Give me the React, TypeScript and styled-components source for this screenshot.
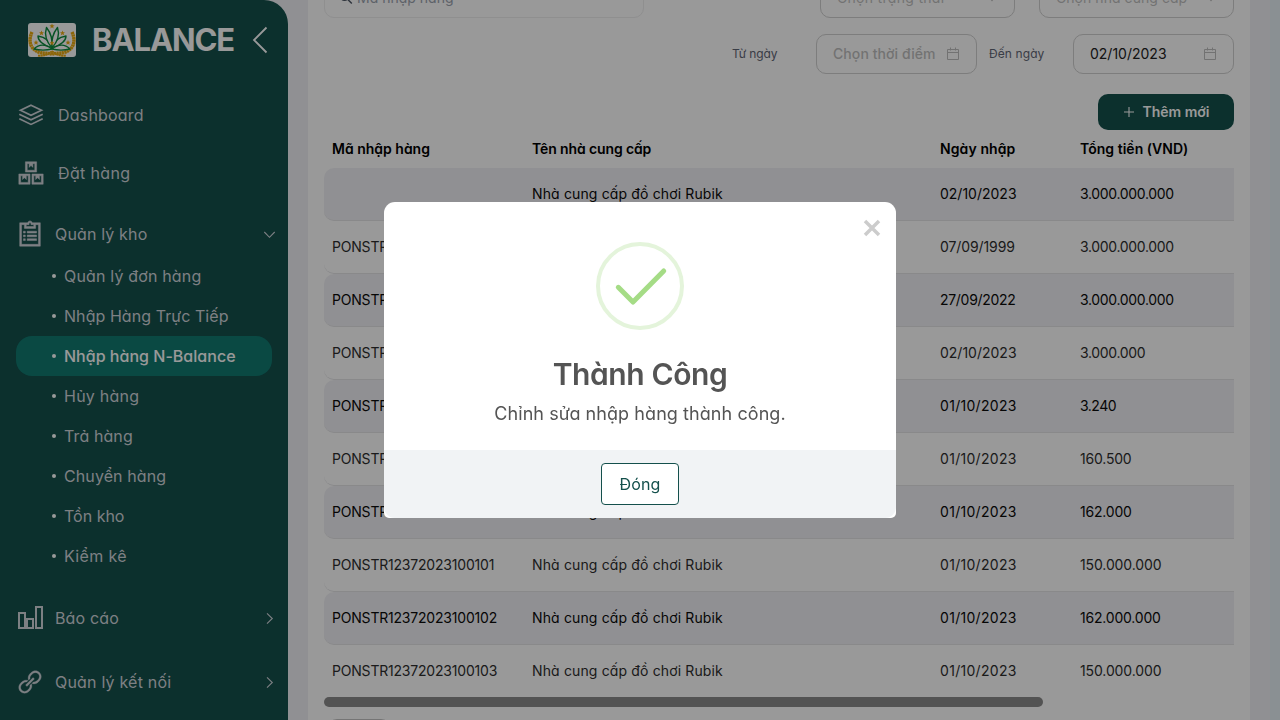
import React from 'react';
import styled, { createGlobalStyle, css } from 'styled-components';
import { LiaBoxesSolid, LiaClipboardListSolid, LiaLinkSolid } from 'react-icons/lia';

const GlobalStyle = createGlobalStyle`
  * { box-sizing: border-box; }
  html, body { margin: 0; height: 720px; overflow: hidden; }
  body {
    font-family: Inter, "Noto Sans", sans-serif;
    font-feature-settings: "cv11";
    font-size: 14px;
    color: #000;
    background: #f1f1f5;
  }
  button { font: inherit; font-feature-settings: inherit; cursor: pointer; }
  svg { display: block; flex: none; }
`;

const Shell = styled.div`
  display: flex;
  width: 1280px;
  height: 720px;
  overflow: hidden;
`;

const Sidebar = styled.aside`
  flex: none;
  width: 288px;
  height: 720px;
  overflow: hidden;
  background: #14504c;
  border-top-right-radius: 24px;
  color: #d1d5db;
`;

const Brand = styled.div`
  display: flex;
  align-items: center;
  height: 80px;
  padding-left: 28px;
`;

const LogoTile = styled.div`
  width: 48px;
  height: 34px;
  border-radius: 3px;
  overflow: hidden;
  background: #fff;
`;

const BrandName = styled.div`
  width: 160px;
  margin-left: 16px;
  font-size: 31px;
  font-weight: 700;
  line-height: 40px;
  letter-spacing: -1.1px;
  color: #fff;
`;

const MenuItem = styled.div<{ $h: number; $left: number; $gap: number }>`
  display: flex;
  align-items: center;
  height: ${(p) => p.$h}px;
  padding: 0 12px 0 ${(p) => p.$left}px;
  font-size: 16px;
  gap: ${(p) => p.$gap}px;
`;

const MenuLabel = styled.span<{ $ls?: number }>`
  flex: 1;
  white-space: nowrap;
  letter-spacing: ${(p) => p.$ls ?? 0}px;
`;

const Nav = styled.nav`
  padding-top: 6px;
`;

const SubList = styled.ul`
  list-style: none;
  margin: -10px 0 10px;
  padding: 0 16px;
`;

const SubItem = styled.li<{ $active?: boolean; $ls?: number }>`
  display: flex;
  align-items: center;
  gap: 8px;
  height: 40px;
  padding-left: 36px;
  border-radius: 16px;
  font-size: 16px;
  white-space: nowrap;
  letter-spacing: ${(p) => p.$ls ?? 0}px;
  ${(p) => p.$active && css`background: #127a71; color: #fff; font-weight: 500;`}
  &::before {
    content: "";
    width: 4px;
    height: 4px;
    border-radius: 2px;
    background: #fff;
  }
`;

const Main = styled.main`
  flex: 1;
  display: flex;
  padding-left: 20px;
`;

const Card = styled.section`
  width: 942px;
  height: 740px;
  padding: 0 16px;
  background: #fff;
`;

const RightGutter = styled.div`
  width: 10px;
  margin-left: auto;
  background: #e6f0f5;
`;

const FilterRow = styled.div`
  display: flex;
  align-items: center;
  height: 40px;
  margin-top: -22px;
`;

const Control = styled.div<{ $w: number; $soft?: boolean; $muted?: boolean }>`
  display: flex;
  align-items: center;
  justify-content: space-between;
  width: ${(p) => p.$w}px;
  height: 40px;
  padding: 0 16px;
  border: 1px solid ${(p) => (p.$soft ? '#eeeeef' : '#d0d0d0')};
  border-radius: 10px;
  color: ${(p) => (p.$muted ? '#bfbfbf' : '#222')};
  font-size: 14px;
  white-space: nowrap;
`;

const ControlText = styled.span<{ $ls?: number; $medium?: boolean }>`
  padding-bottom: 2px;
  letter-spacing: ${(p) => p.$ls ?? 0}px;
  font-weight: ${(p) => (p.$medium ? 500 : 400)};
`;

const SearchBox = styled(Control)`
  justify-content: flex-start;
  gap: 4px;
  padding-left: 14px;
  margin-right: auto;
  color: #9ca3af;
`;

const SelectBox = styled(Control)`
  margin-left: 24px;
`;

const DateRow = styled.div`
  display: flex;
  align-items: center;
  justify-content: flex-end;
  height: 40px;
  margin-top: 16px;
`;

const DateLabel = styled.label<{ $spaced?: boolean; $ls: number }>`
  width: 84px;
  margin-left: ${(p) => (p.$spaced ? 12 : 0)}px;
  padding-bottom: 2px;
  font-size: 12px;
  letter-spacing: ${(p) => p.$ls}px;
  color: #5f6675;
`;

const Actions = styled.div`
  display: flex;
  justify-content: flex-end;
  margin-top: 20px;
`;

const AddButton = styled.button`
  display: flex;
  align-items: center;
  justify-content: center;
  gap: 8px;
  width: 136px;
  height: 36px;
  padding: 0 0 1px;
  border: 0;
  border-radius: 10px;
  background: #14504c;
  color: #fff;
  font-size: 14px;
  font-weight: 600;
`;

const columns = css`
  display: grid;
  grid-template-columns: 200px 408px 140px 1fr;
  align-items: center;
  padding-left: 8px;
  padding-bottom: 2px;
  white-space: nowrap;
`;

const TableHead = styled.div`
  ${columns}
  height: 38px;
  font-weight: 600;
`;

const TableRow = styled.div<{ $striped: boolean }>`
  ${columns}
  height: 53px;
  border-bottom: 1px solid #e4e4e7;
  border-radius: 10px 0 0 10px;
  background: ${(p) => (p.$striped ? '#f1f1f5' : '#fff')};
  color: ${(p) => (p.$striped ? '#0a0a0a' : '#2e2e2e')};
  &:last-child { border-bottom-color: transparent; }
`;

const Cell = styled.span<{ $ls?: number }>`
  letter-spacing: ${(p) => p.$ls ?? 0}px;
`;

const ScrollThumb = styled.div`
  position: relative;
  width: 719px;
  height: 10px;
  margin-top: -1px;
  border-radius: 5px;
  background: #8a8a8a;
`;

const PageSize = styled.div`
  width: 64px;
  height: 32px;
  margin: 12px 0 0 3px;
  border: 1px solid #c4c4c4;
  border-radius: 10px;
`;

const Overlay = styled.div`
  position: fixed;
  inset: 0;
  display: flex;
  align-items: center;
  justify-content: center;
  background: rgba(0, 0, 0, 0.4);
`;

const Dialog = styled.div`
  position: relative;
  display: flex;
  flex-direction: column;
  align-items: center;
  width: 512px;
  height: 316px;
  padding-top: 40px;
  border-radius: 11px 11px 5px 5px;
  overflow: hidden;
  background: #fff;
  color: #545454;
`;

const CloseButton = styled.button`
  position: absolute;
  top: 17px;
  right: 15px;
  padding: 0;
  border: 0;
  background: none;
`;

const Title = styled.h2`
  margin: 24px 0 0;
  font-size: 30px;
  font-weight: 600;
  line-height: 40px;
  letter-spacing: -0.4px;
`;

const Message = styled.p`
  margin: 7px 0 0;
  font-size: 18px;
  line-height: 26px;
  letter-spacing: 0.07px;
`;

const Footer = styled.div`
  display: flex;
  align-items: center;
  justify-content: center;
  width: 100%;
  height: 68px;
  margin-top: auto;
  background: #f1f3f5;
  border-radius: 0 0 11px 11px;
`;

const DismissButton = styled.button`
  width: 78px;
  height: 42px;
  padding: 0;
  border: 1px solid #14504c;
  border-radius: 4px;
  background: #fff;
  color: #14504c;
  font-size: 16px;
  letter-spacing: 0.2px;
`;

const Chevron = ({ down }: { down?: boolean }) => (
  <svg width="13" height="13" viewBox="0 0 13 13" fill="none" stroke="#d1d5db" strokeWidth="1.1">
    <path d={down ? 'M1.3 4l5.2 5.3L11.7 4' : 'M4 1.3l5.3 5.2L4 11.7'} />
  </svg>
);

const SelectArrow = () => (
  <svg width="12" height="12" viewBox="0 0 12 12" fill="none" stroke="#bfbfbf" strokeWidth="1.2">
    <path d="M1.500 3.500L6 8.500l4.500-5" />
  </svg>
);

const CalendarIcon = () => (
  <svg width="14" height="14" viewBox="0 0 14 14" fill="none" stroke="#bfbfbf" strokeWidth="1">
    <path d="M1.500 2.500h11v10h-11zM1.500 5.500h11M4.500 .5v3M9.500 .5v3" />
  </svg>
);

const LayersIcon = () => (
  <svg width="28" height="28" viewBox="0 0 28 28" fill="none" stroke="#d1d5db" strokeWidth="1.7">
    <path d="M14 4.200L24.500 9.200 14 14.200 3.500 9.200z" />
    <path d="M2.300 13.200L14 18.800l11.700-5.600M2.300 17.800L14 23.400l11.700-5.600" />
  </svg>
);

const BarsIcon = () => (
  <svg width="28" height="28" viewBox="0 0 28 28" fill="none" stroke="#d1d5db" strokeWidth="2">
    <path d="M3 9h6v15H3zM11 15h6v9h-6zM20 3h6v21h-6z" />
  </svg>
);

const star = 'M0-2.600L.75-.85 2.600-.8 1.150.35 1.600 2.200 0 1.150-1.600 2.200-1.150.35-2.600-.8-.75-.85z';
const Logo = () => (
  <svg width="48" height="34" viewBox="0 0 48 34">
    <g fill="none" stroke="#eaaa10" strokeWidth="3.400" strokeDasharray="2.200 .35">
      <path d="M4 9C-.5 19 3 27 12 29.500c6 1.500 9 0 12 2" />
      <path d="M44 9c4.500 10 1 18-8 20.500-6 1.500-9 0-12 2" />
      <path d="M10 32.500c6 1 11-1.500 14-4.500 3 3 8 5.500 14 4.500" strokeWidth="2" />
    </g>
    <g fill="#fff" stroke="#0d8a3e" strokeWidth="1.400" strokeLinejoin="round">
      <path d="M24 25C12 21 10 17 10 13c7 1 12 5 14 12z" />
      <path d="M24 25c12-4 14-8 14-12-7 1-12 5-14 12z" />
      <path d="M24 25C17 17 17 9 18.500 4.500c4 5 6.500 11 5.500 20.500z" />
      <path d="M24 25c7-8 7-16 5.500-20.500-4 5-6.500 11-5.500 20.500z" />
      <path d="M24 26C16 20 10 22 6 26c6 1.500 12 1.500 18 0z" />
      <path d="M24 26c8-6 14-4 18 0-6 1.500-12 1.500-18 0z" />
    </g>
    <g fill="#eaaa10">
      {[[24, 3.2], [13.5, 10], [34.5, 10], [8, 19.5], [40, 19.5], [24, 20]].map(([x, y]) => (
        <path key={`${x}-${y}`} d={star} transform={`translate(${x} ${y})`} />
      ))}
    </g>
  </svg>
);

const subItems: { label: string; ls?: number; active?: boolean }[] = [
  { label: 'Quản lý đơn hàng', ls: 0.17 },
  { label: 'Nhập Hàng Trực Tiếp', ls: 0.06 },
  { label: 'Nhập hàng N-Balance', ls: 0.02, active: true },
  { label: 'Hủy hàng', ls: 0.25 },
  { label: 'Trả hàng', ls: 0.1 },
  { label: 'Chuyển hàng', ls: 0.1 },
  { label: 'Tồn kho' },
  { label: 'Kiểm kê', ls: 0.35 },
];

const supplier = 'Nhà cung cấp đồ chơi Rubik';

interface Row {
  code: string;
  date: string;
  dateLs: number;
  total: string;
  totalLs: number;
}

const rows: Row[] = [
  { code: '', date: '02/10/2023', dateLs: 0, total: '3.000.000.000', totalLs: -0.33 },
  { code: 'PONSTR12371999090701', date: '07/09/1999', dateLs: -0.1, total: '3.000.000.000', totalLs: -0.33 },
  { code: 'PONSTR12372022092701', date: '27/09/2022', dateLs: -0.3, total: '3.000.000.000', totalLs: -0.33 },
  { code: 'PONSTR12372023100201', date: '02/10/2023', dateLs: 0, total: '3.000.000', totalLs: -0.33 },
  { code: 'PONSTR12372023100106', date: '01/10/2023', dateLs: 0.3, total: '3.240', totalLs: -0.5 },
  { code: 'PONSTR12372023100105', date: '01/10/2023', dateLs: 0.3, total: '160.500', totalLs: -0.2 },
  { code: 'PONSTR12372023100104', date: '01/10/2023', dateLs: 0.3, total: '162.000', totalLs: -0.2 },
  { code: 'PONSTR12372023100101', date: '01/10/2023', dateLs: 0.3, total: '150.000.000', totalLs: -0.12 },
  { code: 'PONSTR12372023100102', date: '01/10/2023', dateLs: 0.3, total: '162.000.000', totalLs: -0.2 },
  { code: 'PONSTR12372023100103', date: '01/10/2023', dateLs: 0.3, total: '150.000.000', totalLs: -0.12 },
];

export default function App() {
  return (
    <>
      <GlobalStyle />
      <Shell>
        <Sidebar>
          <Brand>
            <LogoTile><Logo /></LogoTile>
            <BrandName>BALANCE</BrandName>
            <svg width="16" height="28" viewBox="0 0 16 28" fill="none" stroke="#fff" strokeWidth="1.8">
              <path d="M14.500 1.500L2 14l12.500 12.500" />
            </svg>
          </Brand>
          <Nav>
            <MenuItem $h={58} $left={17} $gap={13}><LayersIcon /><MenuLabel $ls={0.2}>Dashboard</MenuLabel></MenuItem>
            <MenuItem $h={58} $left={16} $gap={12}><LiaBoxesSolid size={30} strokeWidth={0.5} /><MenuLabel $ls={0.35}>Đặt hàng</MenuLabel></MenuItem>
            <MenuItem $h={64} $left={15} $gap={10}><LiaClipboardListSolid size={30} strokeWidth={0.5} /><MenuLabel $ls={0.15}>Quản lý kho</MenuLabel><Chevron down /></MenuItem>
          </Nav>
          <SubList>
            {subItems.map((item) => (
              <SubItem key={item.label} $active={item.active} $ls={item.ls}>{item.label}</SubItem>
            ))}
          </SubList>
          <MenuItem $h={64} $left={16} $gap={11}><BarsIcon /><MenuLabel $ls={0.15}>Báo cáo</MenuLabel><Chevron /></MenuItem>
          <MenuItem $h={64} $left={15} $gap={10}><LiaLinkSolid size={30} strokeWidth={0.3} /><MenuLabel $ls={0.2}>Quản lý kết nối</MenuLabel><Chevron /></MenuItem>
        </Sidebar>
        <Main>
          <Card>
            <FilterRow>
              <SearchBox $w={320} $soft>
                <svg width="14" height="14" viewBox="0 0 14 14" fill="none" stroke="#4b5563" strokeWidth="1.4">
                  <circle cx="5.500" cy="5" r="4.300" /><path d="M8.600 8.300l4.200 4.200" />
                </svg>
                <ControlText>Mã nhập hàng</ControlText>
              </SearchBox>
              <SelectBox $w={195} $muted><ControlText $ls={0.3}>Chọn trạng thái</ControlText><SelectArrow /></SelectBox>
              <SelectBox $w={195} $muted><ControlText $ls={0.05}>Chọn nhà cung cấp</ControlText><SelectArrow /></SelectBox>
            </FilterRow>
            <DateRow>
              <DateLabel $ls={-0.1}>Từ ngày</DateLabel>
              <Control $w={161} $muted><ControlText $medium $ls={0.08}>Chọn thời điểm</ControlText><CalendarIcon /></Control>
              <DateLabel $spaced $ls={0.1}>Đến ngày</DateLabel>
              <Control $w={161}><ControlText>02/10/2023</ControlText><CalendarIcon /></Control>
            </DateRow>
            <Actions>
              <AddButton>
                <svg width="12" height="12" viewBox="0 0 12 12" fill="none" stroke="#fff" strokeWidth="1.1"><path d="M6 1v10M1 6h10" /></svg>
                Thêm mới
              </AddButton>
            </Actions>
            <TableHead>
              <Cell>Mã nhập hàng</Cell>
              <Cell $ls={-0.12}>Tên nhà cung cấp</Cell>
              <Cell $ls={0.1}>Ngày nhập</Cell>
              <Cell $ls={0.03}>Tổng tiền (VND)</Cell>
            </TableHead>
            <div>
              {rows.map((row, i) => (
                <TableRow key={i} $striped={i % 2 === 0}>
                  <Cell $ls={-0.2}>{row.code}</Cell>
                  <Cell $ls={0.14}>{supplier}</Cell>
                  <Cell $ls={row.dateLs}>{row.date}</Cell>
                  <Cell $ls={row.totalLs}>{row.total}</Cell>
                </TableRow>
              ))}
            </div>
            <ScrollThumb />
            <PageSize />
          </Card>
          <RightGutter />
        </Main>
      </Shell>
      <Overlay>
        <Dialog>
          <CloseButton aria-label="Đóng">
            <svg width="18" height="18" viewBox="0 0 18 18" stroke="#ccc" strokeWidth="3.500"><path d="M2 2l14 14M16 2L2 16" /></svg>
          </CloseButton>
          <svg width="88" height="88" viewBox="0 0 88 88" fill="none">
            <circle cx="44" cy="44" r="42" stroke="#e4f4db" strokeWidth="4" />
            <path d="M22.300 45.300L37 60l30.700-31" stroke="#a5dc86" strokeWidth="5" strokeLinecap="round" strokeLinejoin="round" />
          </svg>
          <Title>Thành Công</Title>
          <Message>Chỉnh sửa nhập hàng thành công.</Message>
          <Footer><DismissButton>Đóng</DismissButton></Footer>
        </Dialog>
      </Overlay>
    </>
  );
}
